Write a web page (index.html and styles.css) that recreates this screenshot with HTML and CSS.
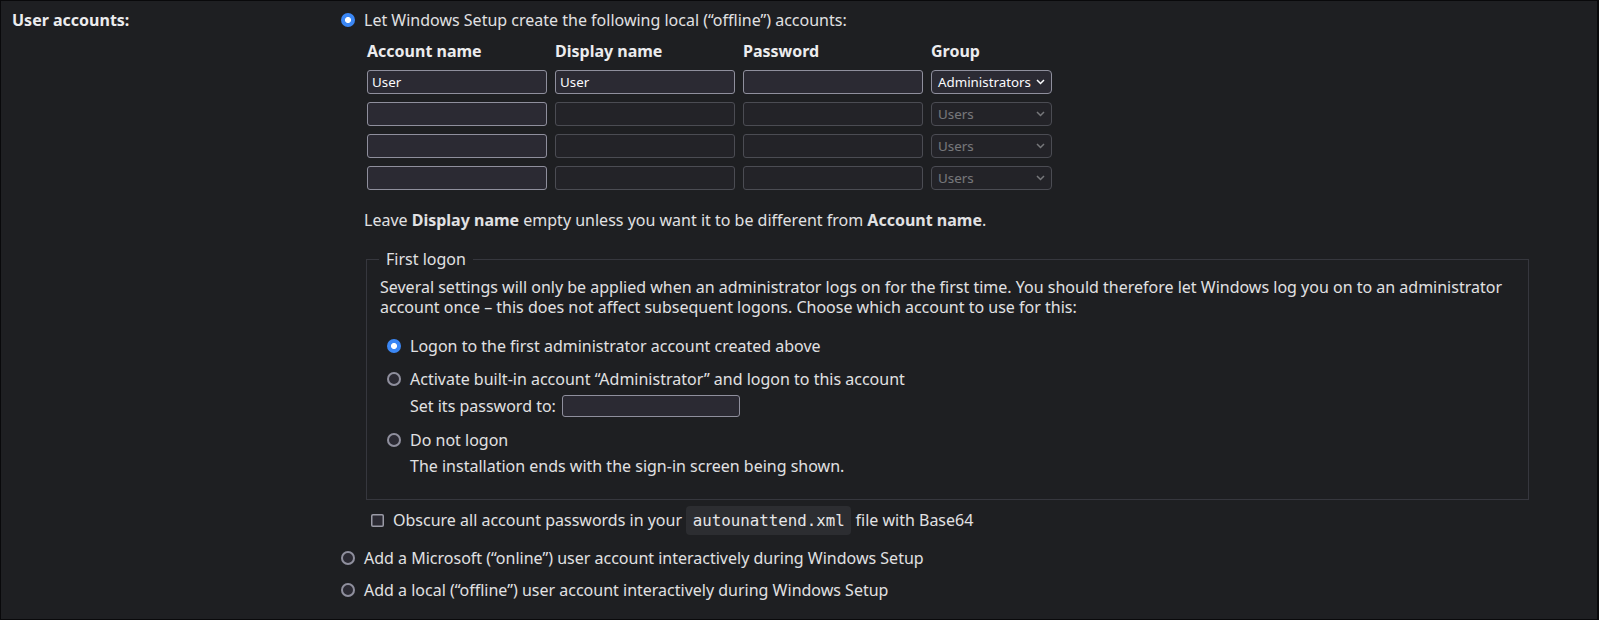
FILE: index.html
```html
<!DOCTYPE html>
<html lang="en">
<head>
<meta charset="utf-8">
<title>User accounts</title>
<link rel="stylesheet" href="styles.css">
</head>
<body>
<div class="panel">
  <div class="label">User accounts:</div>
  <div class="content">
    <label class="opt"><input type="radio" name="acc" checked><span>Let Windows Setup create the following local (“offline”) accounts:</span></label>

    <div class="accounts">
      <div class="th">Account name</div>
      <div class="th">Display name</div>
      <div class="th">Password</div>
      <div class="th">Group</div>

      <input class="field" type="text" value="User">
      <input class="field" type="text" value="User">
      <input class="field" type="password">
      <div class="select"><span>Administrators</span><svg width="9" height="6" viewBox="0 0 9 6"><polyline points="1,1 4.5,4.5 8,1" fill="none" stroke="currentColor" stroke-width="1.5"/></svg></div>

      <input class="field" type="text">
      <input class="field off" type="text" disabled>
      <input class="field off" type="password" disabled>
      <div class="select off"><span>Users</span><svg width="9" height="6" viewBox="0 0 9 6"><polyline points="1,1 4.5,4.5 8,1" fill="none" stroke="currentColor" stroke-width="1.5"/></svg></div>

      <input class="field" type="text">
      <input class="field off" type="text" disabled>
      <input class="field off" type="password" disabled>
      <div class="select off"><span>Users</span><svg width="9" height="6" viewBox="0 0 9 6"><polyline points="1,1 4.5,4.5 8,1" fill="none" stroke="currentColor" stroke-width="1.5"/></svg></div>

      <input class="field" type="text">
      <input class="field off" type="text" disabled>
      <input class="field off" type="password" disabled>
      <div class="select off"><span>Users</span><svg width="9" height="6" viewBox="0 0 9 6"><polyline points="1,1 4.5,4.5 8,1" fill="none" stroke="currentColor" stroke-width="1.5"/></svg></div>
    </div>

    <p class="note">Leave <b>Display name</b> empty unless you want it to be different from <b>Account name</b>.</p>

    <fieldset class="logon">
      <legend>First logon</legend>
      <p class="intro">Several settings will only be applied when an administrator logs on for the first time. You should therefore let Windows log you on to an administrator account once – this does not affect subsequent logons. Choose which account to use for this:</p>
      <label class="opt o1"><input type="radio" name="logon" checked><span>Logon to the first administrator account created above</span></label>
      <label class="opt o2"><input type="radio" name="logon"><span>Activate built-in account “Administrator” and logon to this account</span></label>
      <div class="sub pwd"><span>Set its password to:</span><input class="field small" type="password"></div>
      <label class="opt o3"><input type="radio" name="logon"><span>Do not logon</span></label>
      <div class="sub hint">The installation ends with the sign-in screen being shown.</div>
    </fieldset>

    <label class="check"><input type="checkbox"><span>Obscure all account passwords in your <code>autounattend.xml</code> file with Base64</span></label>

    <label class="opt ms"><input type="radio" name="acc"><span>Add a Microsoft (“online”) user account interactively during Windows Setup</span></label>
    <label class="opt loc"><input type="radio" name="acc"><span>Add a local (“offline”) user account interactively during Windows Setup</span></label>
  </div>
</div>
</body>
</html>
```

FILE: styles.css
```css
html, body {
  margin: 0;
  padding: 0;
}

body {
  background: #1e1f22;
  font-family: "Noto Sans", "DejaVu Sans", sans-serif;
  font-size: 16px;
  line-height: 20px;
  color: #e1e1e3;
}

.panel {
  box-sizing: border-box;
  height: 620px;
  border: 1px solid #09090b;
  border-right-width: 2px;
  display: grid;
  grid-template-columns: 330px 1fr;
  align-items: start;
  padding: 9px 68px 0 11px;
  background: #1e1f22;
}

.label {
  font-weight: 700;
  color: #ececee;
}

.content {
  display: flex;
  flex-direction: column;
  align-items: flex-start;
}

.opt {
  display: flex;
  align-items: center;
  gap: 9px;
}

input[type="radio"] {
  appearance: none;
  -webkit-appearance: none;
  margin: 0 0 0 -1px;
  width: 14px;
  height: 14px;
  flex: none;
  border-radius: 50%;
  background: #2b2a33;
  box-shadow: inset 0 0 0 2px #8f8f9d;
}

input[type="radio"]:checked {
  box-shadow: none;
  background: radial-gradient(circle at center, #ffffff 0 2.7px, #3b87f5 3.3px);
}

input[type="checkbox"] {
  appearance: none;
  -webkit-appearance: none;
  margin: 0;
  width: 13px;
  height: 13px;
  flex: none;
  border-radius: 2px;
  background: #2b2a33;
  box-shadow: inset 0 0 0 1.5px #9a9aa6;
}

/* accounts table */
.accounts {
  display: grid;
  grid-template-columns: 180px 180px 180px 121px;
  grid-template-rows: 21px repeat(4, 24px);
  column-gap: 8px;
  row-gap: 8px;
  margin: 11px 0 0 25px;
}

.th {
  font-weight: 700;
  color: #ececee;
}

.field {
  box-sizing: border-box;
  width: 100%;
  height: 24px;
  margin: 0;
  padding: 0 4px;
  border: 1px solid #8f8f9d;
  border-radius: 3px;
  background: #2b2a33;
  color: #fbfbfe;
  font-family: "Noto Sans", sans-serif;
  font-size: 13.33px;
  outline: none;
}

.field.off,
.field.off:disabled {
  background: #2b2a33;
  border-color: #8f8f9d;
  color: #fbfbfe;
  opacity: 0.4;
}

.select {
  box-sizing: border-box;
  height: 24px;
  display: flex;
  align-items: center;
  justify-content: space-between;
  padding: 0 6px 0 6px;
  border: 1px solid #8f8f9d;
  border-radius: 4px;
  background: #2b2a33;
  color: #fbfbfe;
  font-size: 13.33px;
}

.select svg {
  display: block;
  flex: none;
}

.select.off {
  opacity: 0.4;
}

.note {
  margin: 20px 0 0 22px;
}

/* first logon */
.logon {
  align-self: stretch;
  min-width: 0;
  margin: 19px 0 0 24px;
  padding: 9px 13px 23px;
  border: 1px solid #36373e;
}

.logon legend {
  padding: 0 7px;
  margin-left: -1px;
}

.intro {
  margin: 0;
  line-height: 19.5px;
}

.logon .opt {
  margin-left: 8px;
}

.o1 { margin-top: 19px; }
.o2 { margin-top: 13px; }
.o3 { margin-top: 13px; }

.sub {
  margin-left: 30px;
}

.pwd {
  display: flex;
  align-items: center;
  gap: 6px;
  height: 22px;
  margin-top: 6px;
}

.field.small {
  width: 178px;
  height: 22px;
}

.hint {
  margin-top: 6px;
}

.check {
  display: flex;
  align-items: center;
  gap: 9px;
  margin: 10px 0 0 29px;
}

code {
  font-family: "DejaVu Sans Mono", "Liberation Mono", monospace;
  font-size: 15.8px;
  background: #2c2d31;
  color: #e6e6e8;
  padding: 5px 6.5px;
  border-radius: 4px;
}

.ms { margin-top: 17px; }
.loc { margin-top: 12px; }
```
